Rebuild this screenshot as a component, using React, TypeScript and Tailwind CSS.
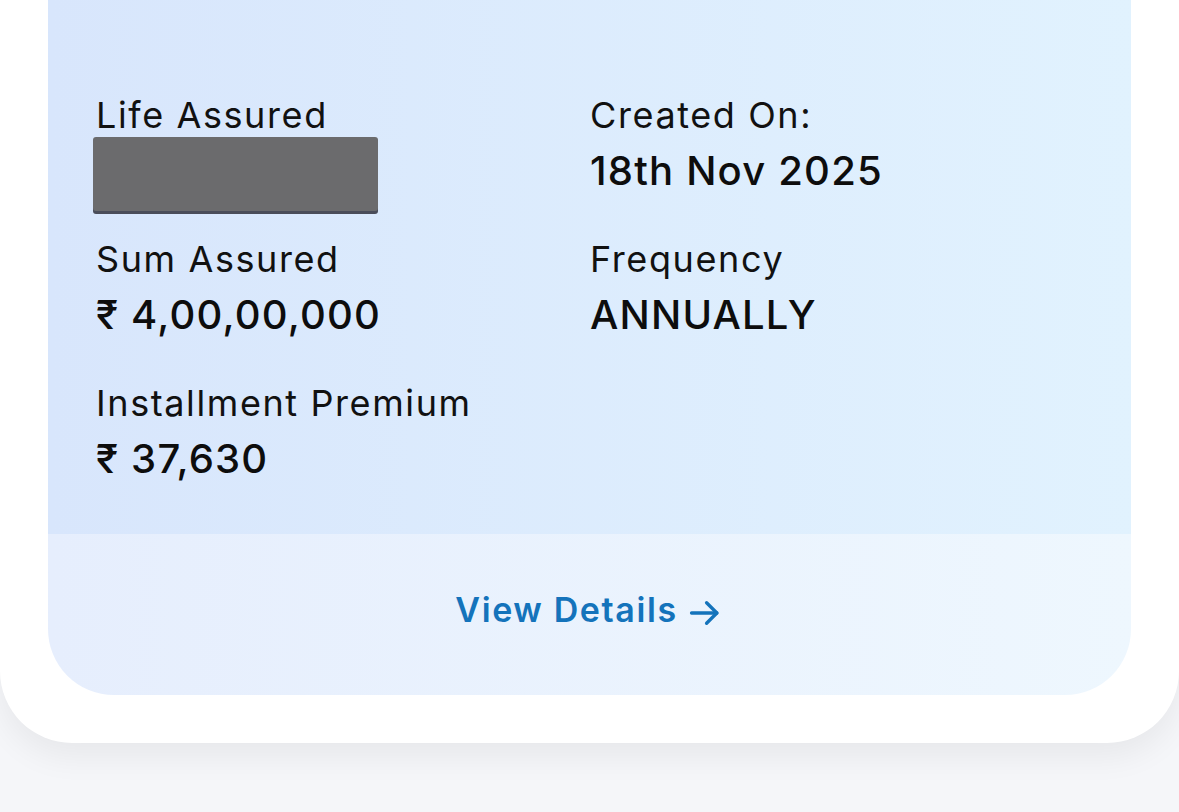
import React from 'react';

const font = { fontFamily: 'Inter, "Noto Sans", sans-serif' };

function Field({ label, children }: { label: string; children: React.ReactNode }) {
    return (
        <div className='flex flex-col'>
            <span className='text-[36px] leading-[42px] text-[#111] tracking-[1.6px]'>{label}</span>
            <div className='h-[102px]'>{children}</div>
        </div>
    );
}

function Value({ text }: { text: string }) {
    return <div className='text-[40px] leading-[52px] font-medium text-[#0d0d0d] tracking-[1.2px] mt-[9px]'>{text}</div>;
}

export default function App() {
    return (
        <div className='w-[1179px] h-[812px] bg-[#f5f6f9] overflow-hidden' style={font}>
            <div className='bg-white rounded-b-[72px] px-[48px] pb-[48px] shadow-[0_14px_32px_rgba(0,0,0,0.06)]'>
                <div className='rounded-b-[66px] overflow-hidden'>
                    <div className='bg-gradient-to-r from-[#d8e6fc] to-[#e1f2fe] pt-[94px] pb-[8px] pl-[48px] grid grid-cols-[494px_1fr]'>
                        <Field label='Life Assured'>
                            <div className='mt-[1px] ml-[-3px] w-[285px] h-[74px] bg-[#6b6b6d] rounded-[3px] shadow-[0_3px_0_#4a4d5a]' />
                        </Field>
                        <Field label='Created On:'>
                            <Value text='18th Nov 2025' />
                        </Field>
                        <Field label='Sum Assured'>
                            <Value text='₹ 4,00,00,000' />
                        </Field>
                        <Field label='Frequency'>
                            <Value text='ANNUALLY' />
                        </Field>
                        <Field label='Installment Premium'>
                            <Value text='₹ 37,630' />
                        </Field>
                    </div>
                    <div className='bg-gradient-to-r from-[#e6eefd] to-[#eef7fe] h-[161px] flex items-center justify-center pb-[10px]'>
                        <button className='flex items-center gap-[8px] text-[#1473bb] text-[34px] font-semibold tracking-[1.6px]'>
                            View Details
                            <svg width='38' height='38' viewBox='0 0 24 24' fill='none' stroke='currentColor' strokeWidth='2.1' strokeLinecap='round' strokeLinejoin='round' className='mt-[6px]'>
                                <path d='M3.5 12h16' />
                                <path d='M13 5.5l6.5 6.5-6.5 6.5' />
                            </svg>
                        </button>
                    </div>
                </div>
            </div>
        </div>
    );
}
